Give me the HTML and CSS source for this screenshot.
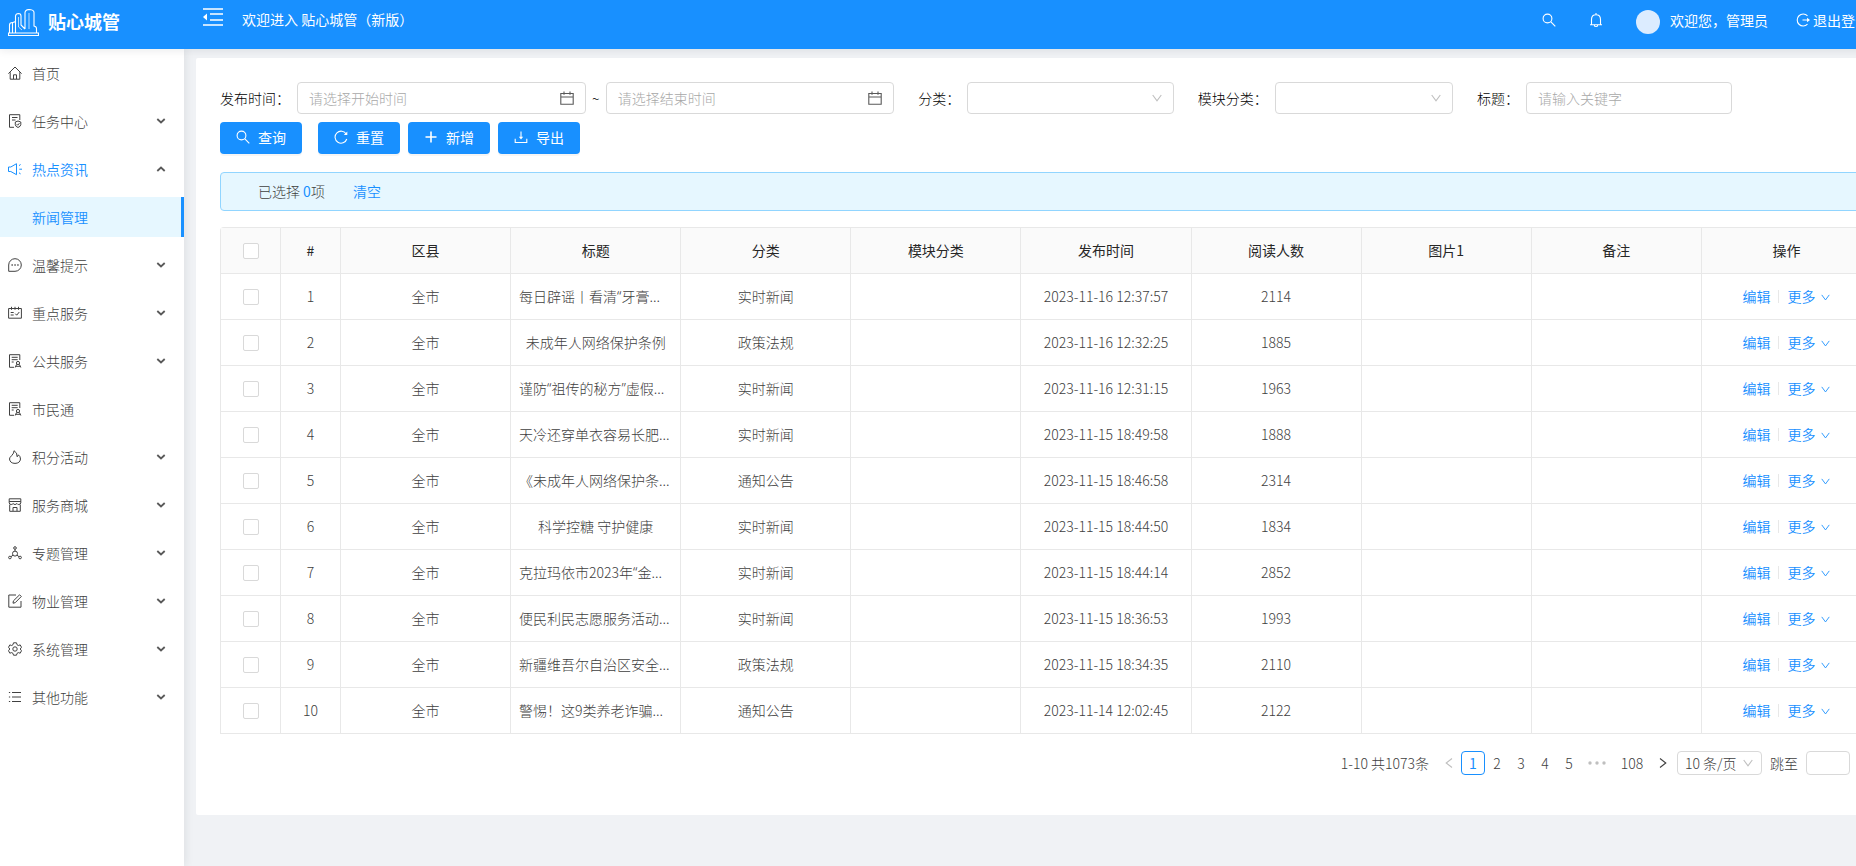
FILE: index.html
```html
<!DOCTYPE html>
<html lang="zh-CN">
<head>
<meta charset="utf-8">
<title>贴心城管</title>
<link rel="stylesheet" href="styles.css">
</head>
<body>
<svg class="sprite" aria-hidden="true">
  <symbol id="i-city" viewBox="0 0 31 27"><path d="M.5 26.500h30v-2.500H.5zM1.500 24V16q0-2.500 3-2.500V24M5 13.500l2.500-1M7.500 24V7q.3-2.500 3-2.500 2.500.1 2.500 2.500v9l4 4M17 20V3.500Q17.500.5 21.500.5 26 1 26 3.500V17q2.500.5 2.500 2.500V24"/><path d="M10.500 8v10l3.500 3M21 4v16" stroke-width=".7"/></symbol>
  <symbol id="i-fold" viewBox="0 0 20 18"><path d="M0 1h20M7 6h13M7 12h13M0 17h20" stroke-width="1.600"/><path d="M0 9l4-3.500v7z" fill="currentColor" stroke="none"/></symbol>
  <symbol id="i-search" viewBox="0 0 14 14"><circle cx="5.500" cy="5.500" r="4.400"/><path d="M8.700 8.700l4.600 4.600"/></symbol>
  <symbol id="i-bell" viewBox="0 0 14 14"><path d="M1 11.800h12M2.500 11.800V6.500Q2.500 1.700 7 1.700t4.500 4.800v5.300M7 1.700V0M5.300 12q.2 1.700 1.700 1.700T8.700 12"/></symbol>
  <symbol id="i-exit" viewBox="0 0 14 14"><path d="M11.500 2.800a6 6 0 1 0 0 8.400M6.500 7h6"/><path d="M11 4.800L14 7l-3 2.200z" fill="currentColor" stroke="none"/></symbol>
  <symbol id="i-home" viewBox="0 0 14 14"><path d="M.4 7.600L7 1l6.600 6.600M2.200 6.200v7h9.600v-7M5.500 13V8.800h3V13"/></symbol>
  <symbol id="i-task" viewBox="0 0 14 14"><path d="M6 13.300H1.500V.7h10.300V6M4 3.500h5.500M4 6h3.500M12.800 8L10 7 7.300 8v2.700Q7.500 12.500 10 13.500q2.600-1 2.800-2.800zM8.700 10.200l1 1 1.700-2"/></symbol>
  <symbol id="i-sound" viewBox="0 0 14 14"><path d="M.5 5v4.500h2.300l5.700 3.200V1.700L2.800 5zM11.300 7.200H14M11 3.600l1.600-1.100M11 10.800l1.600 1.100"/></symbol>
  <symbol id="i-msg" viewBox="0 0 14 14"><path d="M.7 13.300V7A6.300 6.300 0 1 1 7 13.300z"/><path d="M3.500 7h1.300M6.400 7h1.300M9.300 7h1.300" stroke-width="1.400"/></symbol>
  <symbol id="i-sched" viewBox="0 0 14 14"><path d="M.6 2.500h12.800v9.700H.6zM3.500.8v3M7 .8v3M10.500.8v3M2.700 6.500h3M2.700 9h3M7.300 7.700l1.400 1.500L11.300 6"/></symbol>
  <symbol id="i-audit" viewBox="0 0 14 14"><path d="M6 13.300H1.500V.7h10.300V6M3.700 3.300h6M3.700 5.700h6M3.700 8h2M7.200 13.500l1.500-3.200M12.800 13.500l-1.500-3.200M7.500 12.300h5"/><circle cx="10" cy="9" r="1.600"/></symbol>
  <symbol id="i-fire" viewBox="0 0 14 14"><path d="M6 .7Q6.300 3 3.600 5.700 1.500 7.500 1.500 9q.5 4.300 5.500 4.400 5-.1 5.500-4.400 0-2.700-2.200-4.200-.2 1.500-1.200 2Q9.500 2.500 6 .7z"/></symbol>
  <symbol id="i-shop" viewBox="0 0 14 14"><path d="M1.200.8h11.600V5q-.6 1.500-2 1.500T8.900 5.500Q8 6.500 7 6.500T5.100 5.500Q4.300 6.500 3.200 6.500 1.700 6.500 1.200 5zM1.200 3.500h11.600M1.700 6.500v6.800h10.600V6.500M5 13V9.500h4V13"/></symbol>
  <symbol id="i-deploy" viewBox="0 0 14 14"><circle cx="7" cy="2" r="1.300"/><circle cx="1.900" cy="11.500" r="1.300"/><circle cx="12.100" cy="11.500" r="1.300"/><circle cx="7" cy="7.600" r="2.500"/><path d="M7 3.300v1.800M5 9.200L3 10.700M9 9.200l2 1.500"/></symbol>
  <symbol id="i-form" viewBox="0 0 14 14"><path d="M13 7v6.200H.8V1H8M5 9.200l.4-2.300L11.600.8l1.700 1.700-6.100 6.200z"/></symbol>
  <symbol id="i-gear" viewBox="0 0 14 14"><path d="M5.500.8h3l.5 1.900 1.300.8 1.900-.6 1.300 2.400L12.200 7l1.300 1.700-1.300 2.500-1.900-.6-1.300.8-.5 1.800h-3L5 11.400l-1.300-.8-1.900.6L.5 8.700 1.800 7 .5 5.300l1.300-2.400 1.900.6L5 2.700z"/><circle cx="7" cy="7" r="2.200"/></symbol>
  <symbol id="i-list" viewBox="0 0 14 14"><path d="M4 2.500h9M4 7h9M4 11.500h9M.9 2.500h1.300M.9 7h1.300M.9 11.500h1.300"/></symbol>
  <symbol id="i-arrow" viewBox="0 0 10 6"><path d="M1.300 1L5 4.500 8.700 1" stroke-width="1.800"/></symbol>
  <symbol id="i-down" viewBox="0 0 10 8"><path d="M.7 1L5 6.800 9.300 1"/></symbol>
  <symbol id="i-cal" viewBox="0 0 14 14"><path d="M.8 2.500h12.400v10.700H.8zM.8 6h12.400M4 .5v3.200M10 .5v3.200"/></symbol>
  <symbol id="i-reload" viewBox="0 0 14 14"><path d="M12.300 4.200A6 6 0 1 0 12.800 9"/><path d="M13.300 1.500v3.600H9.800z" fill="currentColor" stroke="none"/></symbol>
  <symbol id="i-plus" viewBox="0 0 14 14"><path d="M7 1.500v11M1.500 7h11" stroke-width="1.600"/></symbol>
  <symbol id="i-export" viewBox="0 0 14 14"><path d="M1.200 8.800v3.700h11.600V8.800M7 1.500V8"/><path d="M4.800 6.800h4.400L7 9.600z" fill="currentColor" stroke="none"/></symbol>
  <symbol id="i-prev" viewBox="0 0 8 10"><path d="M7 .5L1.200 5 7 9.500"/></symbol>
  <symbol id="i-next" viewBox="0 0 8 10"><path d="M1 .5L6.800 5 1 9.500"/></symbol>
  <symbol id="i-dots" viewBox="0 0 18 4"><g fill="currentColor" stroke="none"><circle cx="2" cy="2" r="1.700"/><circle cx="9" cy="2" r="1.700"/><circle cx="16" cy="2" r="1.700"/></g></symbol>
</svg>

<div class="shell">
  <header class="topbar">
    <div class="brand"><svg class="brand-icon"><use href="#i-city"/></svg><h1 class="brand-name">贴心城管</h1></div>
    <button class="fold" aria-label="收起菜单"><svg class="fold-icon"><use href="#i-fold"/></svg></button>
    <span class="welcome">欢迎进入 贴心城管（新版）</span>
    <div class="tools">
      <button class="tool" aria-label="搜索"><svg class="icon"><use href="#i-search"/></svg></button>
      <button class="tool" aria-label="通知"><svg class="icon"><use href="#i-bell"/></svg></button>
      <span class="user"><span class="avatar"></span>欢迎您，管理员</span>
      <a class="logout" href="#"><svg class="icon"><use href="#i-exit"/></svg>退出登录</a>
    </div>
  </header>

  <div class="body">
    <nav class="sidebar">
      <a class="item" href="#"><svg class="icon"><use href="#i-home"/></svg>首页</a>
      <a class="item" href="#"><svg class="icon"><use href="#i-task"/></svg>任务中心<svg class="caret"><use href="#i-arrow"/></svg></a>
      <a class="item open" href="#"><svg class="icon"><use href="#i-sound"/></svg>热点资讯<svg class="caret"><use href="#i-arrow"/></svg></a>
      <a class="item sub" href="#">新闻管理</a>
      <a class="item" href="#"><svg class="icon"><use href="#i-msg"/></svg>温馨提示<svg class="caret"><use href="#i-arrow"/></svg></a>
      <a class="item" href="#"><svg class="icon"><use href="#i-sched"/></svg>重点服务<svg class="caret"><use href="#i-arrow"/></svg></a>
      <a class="item" href="#"><svg class="icon"><use href="#i-audit"/></svg>公共服务<svg class="caret"><use href="#i-arrow"/></svg></a>
      <a class="item" href="#"><svg class="icon"><use href="#i-audit"/></svg>市民通</a>
      <a class="item" href="#"><svg class="icon"><use href="#i-fire"/></svg>积分活动<svg class="caret"><use href="#i-arrow"/></svg></a>
      <a class="item" href="#"><svg class="icon"><use href="#i-shop"/></svg>服务商城<svg class="caret"><use href="#i-arrow"/></svg></a>
      <a class="item" href="#"><svg class="icon"><use href="#i-deploy"/></svg>专题管理<svg class="caret"><use href="#i-arrow"/></svg></a>
      <a class="item" href="#"><svg class="icon"><use href="#i-form"/></svg>物业管理<svg class="caret"><use href="#i-arrow"/></svg></a>
      <a class="item" href="#"><svg class="icon"><use href="#i-gear"/></svg>系统管理<svg class="caret"><use href="#i-arrow"/></svg></a>
      <a class="item" href="#"><svg class="icon"><use href="#i-list"/></svg>其他功能<svg class="caret"><use href="#i-arrow"/></svg></a>
    </nav>

    <main class="card">
      <form class="filters">
        <div class="field">
          <label for="start">发布时间：</label>
          <span class="box"><input id="start" type="text" placeholder="请选择开始时间"><svg class="icon box-icon"><use href="#i-cal"/></svg></span>
          <span class="tilde">~</span>
          <span class="box"><input type="text" aria-label="结束时间" placeholder="请选择结束时间"><svg class="icon box-icon"><use href="#i-cal"/></svg></span>
        </div>
        <div class="field">
          <label for="cat">分类：</label>
          <span class="box"><select id="cat"><option></option></select><svg class="chev"><use href="#i-down"/></svg></span>
        </div>
        <div class="field">
          <label for="mod">模块分类：</label>
          <span class="box"><select id="mod"><option></option></select><svg class="chev"><use href="#i-down"/></svg></span>
        </div>
        <div class="field">
          <label for="kw">标题：</label>
          <span class="box"><input id="kw" type="text" placeholder="请输入关键字"></span>
        </div>
      </form>

      <div class="actions">
        <button class="btn query"><svg class="icon"><use href="#i-search"/></svg>查询</button>
        <button class="btn"><svg class="icon"><use href="#i-reload"/></svg>重置</button>
        <button class="btn"><svg class="icon"><use href="#i-plus"/></svg>新增</button>
        <button class="btn"><svg class="icon"><use href="#i-export"/></svg>导出</button>
      </div>

      <div class="alert"><span>已选择 <b class="count">0</b>项</span><a class="link" href="#">清空</a></div>

      <table class="grid">
        <colgroup><col class="c-s"><col class="c-s"><col><col><col><col><col><col><col><col><col></colgroup>
        <thead><tr><th><input type="checkbox" aria-label="全选"></th><th>#</th><th>区县</th><th>标题</th><th>分类</th><th>模块分类</th><th>发布时间</th><th>阅读人数</th><th>图片1</th><th>备注</th><th>操作</th></tr></thead>
        <tbody>
          <tr><td><input type="checkbox" aria-label="选择第1行"></td><td>1</td><td>全市</td><td class="cut">每日辟谣丨看清<q>“</q>牙膏...</td><td>实时新闻</td><td></td><td>2023-11-16 12:37:57</td><td>2114</td><td></td><td></td><td><div class="ops"><a class="link" href="#">编辑</a><i class="sep"></i><a class="link more" href="#">更多<svg class="mini"><use href="#i-down"/></svg></a></div></td></tr>
          <tr><td><input type="checkbox" aria-label="选择第2行"></td><td>2</td><td>全市</td><td>未成年人网络保护条例</td><td>政策法规</td><td></td><td>2023-11-16 12:32:25</td><td>1885</td><td></td><td></td><td><div class="ops"><a class="link" href="#">编辑</a><i class="sep"></i><a class="link more" href="#">更多<svg class="mini"><use href="#i-down"/></svg></a></div></td></tr>
          <tr><td><input type="checkbox" aria-label="选择第3行"></td><td>3</td><td>全市</td><td class="cut">谨防<q>“</q>祖传的秘方<q>”</q>虚假...</td><td>实时新闻</td><td></td><td>2023-11-16 12:31:15</td><td>1963</td><td></td><td></td><td><div class="ops"><a class="link" href="#">编辑</a><i class="sep"></i><a class="link more" href="#">更多<svg class="mini"><use href="#i-down"/></svg></a></div></td></tr>
          <tr><td><input type="checkbox" aria-label="选择第4行"></td><td>4</td><td>全市</td><td class="cut">天冷还穿单衣容易长肥...</td><td>实时新闻</td><td></td><td>2023-11-15 18:49:58</td><td>1888</td><td></td><td></td><td><div class="ops"><a class="link" href="#">编辑</a><i class="sep"></i><a class="link more" href="#">更多<svg class="mini"><use href="#i-down"/></svg></a></div></td></tr>
          <tr><td><input type="checkbox" aria-label="选择第5行"></td><td>5</td><td>全市</td><td class="cut">《未成年人网络保护条...</td><td>通知公告</td><td></td><td>2023-11-15 18:46:58</td><td>2314</td><td></td><td></td><td><div class="ops"><a class="link" href="#">编辑</a><i class="sep"></i><a class="link more" href="#">更多<svg class="mini"><use href="#i-down"/></svg></a></div></td></tr>
          <tr><td><input type="checkbox" aria-label="选择第6行"></td><td>6</td><td>全市</td><td>科学控糖 守护健康</td><td>实时新闻</td><td></td><td>2023-11-15 18:44:50</td><td>1834</td><td></td><td></td><td><div class="ops"><a class="link" href="#">编辑</a><i class="sep"></i><a class="link more" href="#">更多<svg class="mini"><use href="#i-down"/></svg></a></div></td></tr>
          <tr><td><input type="checkbox" aria-label="选择第7行"></td><td>7</td><td>全市</td><td class="cut">克拉玛依市2023年<q>“</q>金...</td><td>实时新闻</td><td></td><td>2023-11-15 18:44:14</td><td>2852</td><td></td><td></td><td><div class="ops"><a class="link" href="#">编辑</a><i class="sep"></i><a class="link more" href="#">更多<svg class="mini"><use href="#i-down"/></svg></a></div></td></tr>
          <tr><td><input type="checkbox" aria-label="选择第8行"></td><td>8</td><td>全市</td><td class="cut">便民利民志愿服务活动...</td><td>实时新闻</td><td></td><td>2023-11-15 18:36:53</td><td>1993</td><td></td><td></td><td><div class="ops"><a class="link" href="#">编辑</a><i class="sep"></i><a class="link more" href="#">更多<svg class="mini"><use href="#i-down"/></svg></a></div></td></tr>
          <tr><td><input type="checkbox" aria-label="选择第9行"></td><td>9</td><td>全市</td><td class="cut">新疆维吾尔自治区安全...</td><td>政策法规</td><td></td><td>2023-11-15 18:34:35</td><td>2110</td><td></td><td></td><td><div class="ops"><a class="link" href="#">编辑</a><i class="sep"></i><a class="link more" href="#">更多<svg class="mini"><use href="#i-down"/></svg></a></div></td></tr>
          <tr><td><input type="checkbox" aria-label="选择第10行"></td><td>10</td><td>全市</td><td class="cut">警惕！这9类养老诈骗...</td><td>通知公告</td><td></td><td>2023-11-14 12:02:45</td><td>2122</td><td></td><td></td><td><div class="ops"><a class="link" href="#">编辑</a><i class="sep"></i><a class="link more" href="#">更多<svg class="mini"><use href="#i-down"/></svg></a></div></td></tr>
        </tbody>
      </table>

      <div class="pager">
        <span class="total">1-10 共1073条</span>
        <button class="page dim" aria-label="上一页"><svg class="turn"><use href="#i-prev"/></svg></button>
        <button class="page on">1</button>
        <button class="page">2</button>
        <button class="page">3</button>
        <button class="page">4</button>
        <button class="page">5</button>
        <span class="dots dim"><svg class="dots-icon"><use href="#i-dots"/></svg></span>
        <button class="page wide">108</button>
        <button class="page" aria-label="下一页"><svg class="turn"><use href="#i-next"/></svg></button>
        <span class="box size"><select aria-label="每页条数"><option>10 条/页</option></select><svg class="chev"><use href="#i-down"/></svg></span>
        <label class="jump">跳至<input type="text">页</label>
      </div>
    </main>
  </div>
</div>
</body>
</html>
```

FILE: styles.css
```css
* { box-sizing: border-box; }

html { overflow: hidden; }

body {
  margin: 0;
  background: #f0f2f5;
  color: #404040;
  font: 300 14px/22px "Noto Sans CJK SC", sans-serif;
}

a { color: inherit; text-decoration: none; }

button, input, select {
  margin: 0;
  padding: 0;
  border: 0;
  background: none;
  color: inherit;
  font: inherit;
}

svg { flex: none; fill: none; stroke: currentColor; stroke-width: 1.100; }

.sprite { display: none; }
.icon { width: 14px; height: 14px; }

.shell {
  display: flex;
  flex-direction: column;
  min-width: 1908px;
  min-height: 100vh;
}

/* header */
.topbar {
  position: relative;
  z-index: 1;
  display: flex;
  align-items: center;
  height: 49px;
  padding-bottom: 10px;
  background: #1890ff;
  box-shadow: 0 2px 8px rgba(0, 21, 41, .08);
  color: #fff;
  font-weight: 400;
}

.brand { display: flex; align-items: center; gap: 9px; width: 203px; padding: 2px 0 0 8px; }
.brand-icon { width: 31px; height: 27px; margin-top: 3px; }
.brand-name { margin: 0; font-size: 18px; font-weight: 700; line-height: 28px; }
.fold { display: flex; padding-bottom: 5px; }
.fold-icon { width: 20px; height: 18px; }
.welcome { margin-left: 19px; padding-bottom: 2px; }
.tools { display: flex; align-items: center; margin-left: auto; padding-right: 39px; }
.tool { display: flex; width: 47px; justify-content: center; }
.user { display: flex; align-items: center; gap: 10px; margin-left: 17px; }
.avatar { width: 24px; height: 24px; margin-top: 4px; border-radius: 50%; background: #dcecff; }
.logout { display: flex; align-items: center; gap: 3px; margin-left: 28px; }

.body { display: flex; flex: 1; align-items: flex-start; }

/* sidebar */
.sidebar {
  align-self: stretch;
  flex: none;
  width: 184px;
  padding-top: 4px;
  background: #fff;
  box-shadow: 2px 0 8px rgba(29, 35, 41, .08);
}

.item {
  display: flex;
  align-items: center;
  gap: 10px;
  height: 40px;
  margin-bottom: 8px;
  padding: 0 18px 1px 8px;
}
.item .icon { stroke-width: 1; }

.item.open { color: #1890ff; font-weight: 350; }
.item.sub {
  padding-left: 32px;
  border-right: 3px solid #1890ff;
  background: #e6f7ff;
  color: #1890ff;
  font-weight: 350;
}

.caret { width: 10px; height: 6px; margin-left: auto; color: #595959; }
.open .caret { transform: rotate(180deg); }

/* content card */
.card {
  flex: 1;
  min-width: 0;
  margin: 9px 12px 12px;
  padding: 24px 24px 40px;
  border-radius: 2px;
  background: #fff;
}

.filters {
  display: grid;
  grid-template-columns: 10fr 4fr 4fr 4fr 2fr;
  margin-right: -24px;
}

.field { display: flex; align-items: center; padding-right: 24px; color: #000; }
.field label { margin-right: 7px; white-space: nowrap; }
.tilde { width: 20px; text-align: center; }

.box { position: relative; display: flex; flex: 1; align-items: center; min-width: 0; }
.box input, .box select {
  width: 100%;
  height: 32px;
  padding: 0 11px;
  border: 1px solid #d9d9d9;
  border-radius: 4px;
  background: #fff;
  appearance: none;
}
.box input::placeholder { color: #a8a8a8; }
.box-icon { position: absolute; right: 12px; color: #595959; }
.chev { position: absolute; right: 12px; width: 10px; height: 8px; color: #bfbfbf; }

.actions { display: flex; gap: 8px; margin: 8px 0 18px; }
.btn {
  display: flex;
  align-items: center;
  justify-content: center;
  gap: 8px;
  width: 82px;
  height: 32px;
  padding-bottom: 2px;
  border-radius: 4px;
  background: #1890ff;
  box-shadow: 0 2px 0 rgba(0, 0, 0, .04);
  color: #fff;
  font-weight: 400;
}
.query { margin-right: 8px; }

.alert {
  display: flex;
  gap: 28px;
  margin-bottom: 16px;
  padding: 7px 37px 8px;
  border: 1px solid #91d5ff;
  border-radius: 4px;
  background: #e6f7ff;
}
.count { color: #1890ff; font-weight: 400; }
.link { color: #1890ff; font-weight: 350; }

/* data grid */
.grid {
  width: 100%;
  table-layout: fixed;
  border-spacing: 0;
  border-top: 1px solid #e8e8e8;
  border-left: 1px solid #e8e8e8;
  border-radius: 4px 4px 0 0;
}
.c-s { width: 60px; }
.grid th, .grid td {
  height: 46px;
  padding: 0 8px 1px;
  border-right: 1px solid #e8e8e8;
  border-bottom: 1px solid #e8e8e8;
  text-align: center;
  white-space: nowrap;
}
.grid th { background: #fafafa; color: #262626; font-weight: 400; }
.grid .cut { overflow: hidden; text-align: left; }
.grid q { font-family: "Noto Sans", sans-serif; quotes: none; }

.grid input {
  display: block;
  width: 16px;
  height: 16px;
  margin: 1px auto 0;
  border: 1px solid #d9d9d9;
  border-radius: 2px;
  background: #fff;
  appearance: none;
}

.ops { display: flex; align-items: center; justify-content: center; gap: 8px; }
.sep { width: 1px; height: 13px; background: #e8e8e8; }
.more { display: flex; align-items: center; gap: 6px; }
.mini { width: 9px; height: 7px; margin-top: 2px; stroke-width: 1; }

/* pagination */
.pager { display: flex; align-items: center; justify-content: flex-end; margin-top: 17px; }
.total { margin-right: 8px; }
.page {
  display: flex;
  align-items: center;
  justify-content: center;
  width: 24px;
  height: 24px;
}
.page.on { border: 1px solid #1890ff; border-radius: 4px; color: #1890ff; font-weight: 400; }
.page.wide { width: 38px; }
.turn { width: 8px; height: 10px; }
.dim { color: #bfbfbf; }
.dots { display: flex; justify-content: center; width: 32px; }
.dots-icon { width: 18px; height: 4px; }
.size { flex: none; width: 85px; margin: 0 8px 0 2px; }
.box.size select { height: 24px; padding: 0 7px; line-height: 22px; }
.size .chev { right: 9px; }
.jump { display: flex; align-items: center; gap: 8px; }
.jump input { width: 44px; height: 24px; border: 1px solid #d9d9d9; border-radius: 4px; }
```
